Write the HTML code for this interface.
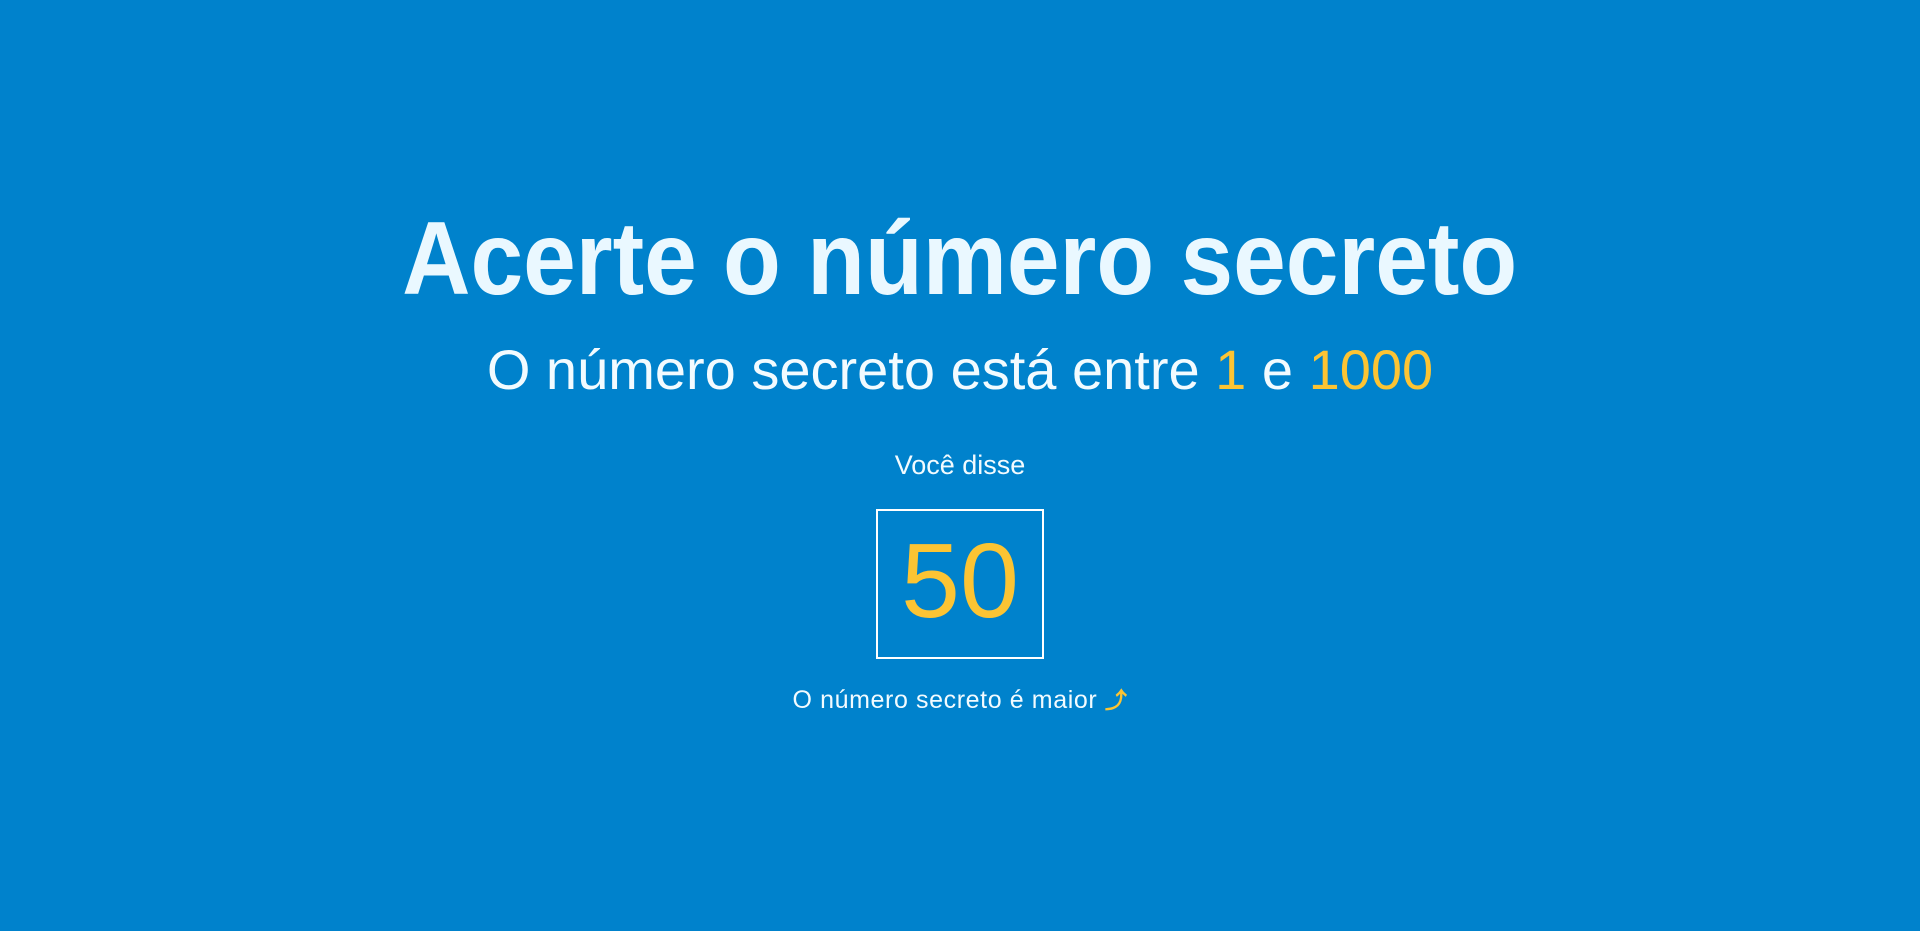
<!DOCTYPE html>
<html><head><meta charset="utf-8"><style>
html,body{margin:0;width:1920px;height:931px;overflow:hidden;background:#0082cc;font-family:"Liberation Sans",sans-serif;color:#eaf8ff}
.a{position:absolute;left:0;width:1920px;text-align:center;white-space:nowrap}
h1{margin:0;font-size:104px;font-weight:bold;line-height:1}
.t{top:207px}
.t span{display:inline-block;transform:scaleX(.91)}
.s{top:337px;font-size:56px;font-weight:300;color:#f2fbff}
.y{color:#fcc433}
.v{top:450px;font-size:27px;color:#f2fbff}
.box{position:absolute;left:876px;top:509px;width:164px;height:146px;border:2px solid #fff;color:#fcc433;font-size:106px;line-height:140px;text-align:center}
.m{top:683px;font-size:25px;letter-spacing:.6px;color:#f2fbff;left:0;width:1920px}
.m span{display:inline-block;margin-left:0px}
</style></head><body>
<div class="a t"><h1><span>Acerte o número secreto</span></h1></div>
<div class="a s">O número secreto está entre <span class="y">1</span> e <span class="y">1000</span></div>
<div class="a v">Você disse</div>
<div class="box">50</div>
<div class="a m"><span>O número secreto é maior <b class="y" style="font-weight:bold;font-size:22px">⤴</b></span></div>
</body></html>
